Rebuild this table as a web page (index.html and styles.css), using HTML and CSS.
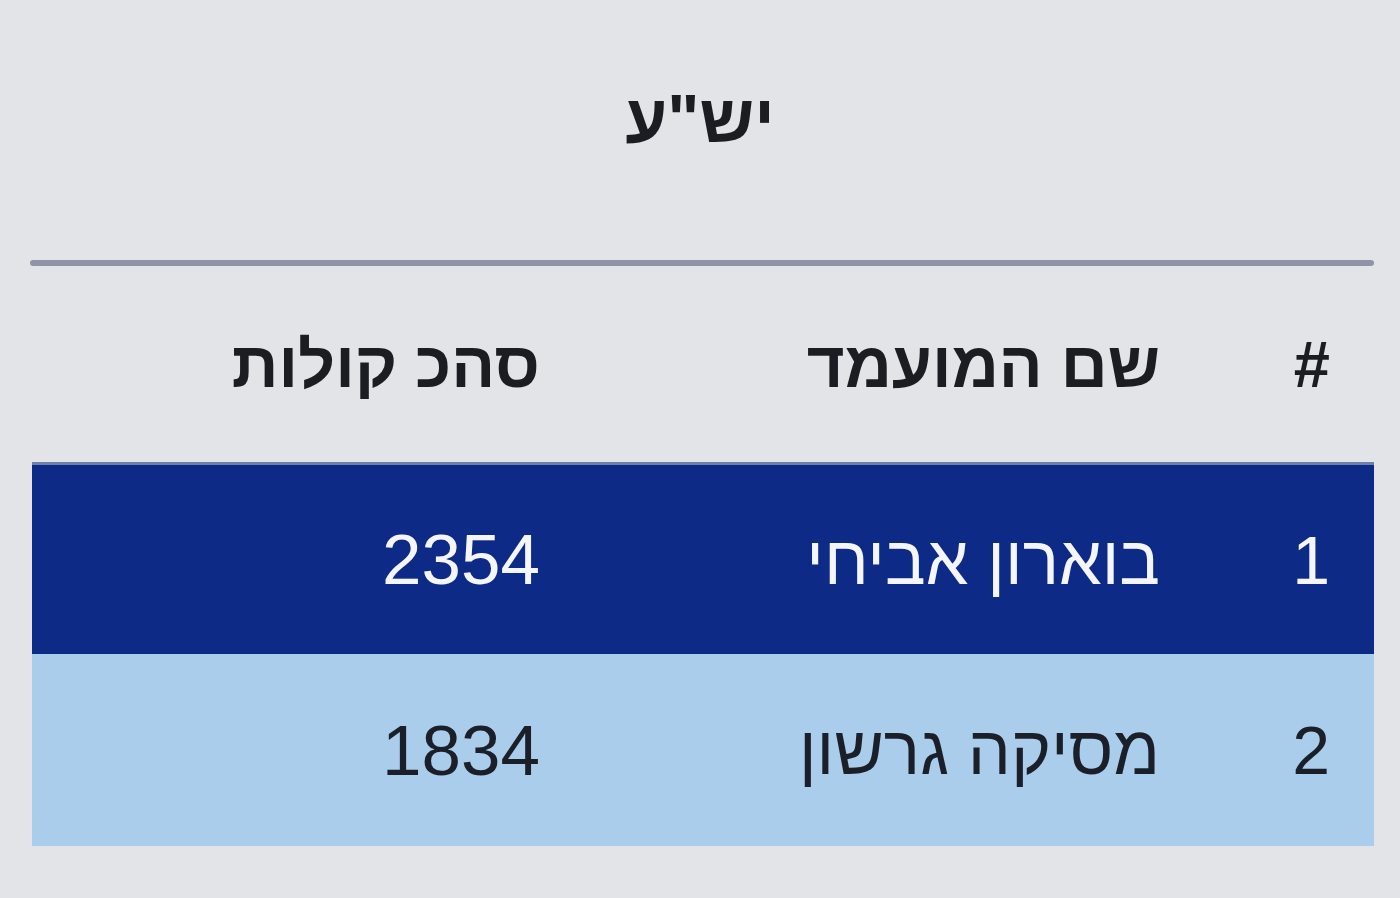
FILE: index.html
```html
<!DOCTYPE html>
<html lang="he" dir="rtl">
<head>
<meta charset="utf-8">
<link rel="stylesheet" href="styles.css">
</head>
<body>
<div class="page">
  <h1 class="title">יש"ע</h1>
  <div class="rule"></div>
  <div class="table">
    <div class="row head">
      <div class="cell">#</div>
      <div class="cell">שם המועמד</div>
      <div class="cell">סהכ קולות</div>
    </div>
    <div class="row first">
      <div class="cell">1</div>
      <div class="cell">בוארון אביחי</div>
      <div class="cell num">2354</div>
    </div>
    <div class="row second">
      <div class="cell">2</div>
      <div class="cell">מסיקה גרשון</div>
      <div class="cell num">1834</div>
    </div>
  </div>
</div>
</body>
</html>
```

FILE: styles.css
```css
html, body {
  margin: 0;
  padding: 0;
  background: #e3e4e7;
}
body {
  font-family: "Liberation Sans", Arial, sans-serif;
  color: #1b1d22;
  width: 1400px;
  height: 898px;
  overflow: hidden;
}
.page {
  padding-left: 26px;
  padding-right: 26px;
}
.title {
  margin: 0;
  padding-top: 84px;
  height: 260px;
  box-sizing: border-box;
  text-align: center;
  font-size: 68px;
  line-height: 68px;
  font-weight: bold;
}
.rule {
  height: 6px;
  margin-left: 4px;
  background: #8f95a6;
  border-radius: 3px;
}
.table {
  margin-left: 6px;
}
.row {
  display: grid;
  grid-template-columns: 170px 620px 1fr;
  align-items: center;
}
.cell {
  padding-right: 44px;
  text-align: right;
}
.head {
  height: 196px;
  font-weight: bold;
  font-size: 65px;
  color: #1c1d22;
}
.first, .second {
  height: 192px;
  font-size: 68px;
}
.num {
  font-size: 71px;
}
.first {
  background: #0d2a86;
  color: #f4f6fb;
  border-top: 3px solid #6f7fa8;
  box-sizing: border-box;
}
.second {
  background: #a9cdeb;
  color: #1a1f29;
}
```
